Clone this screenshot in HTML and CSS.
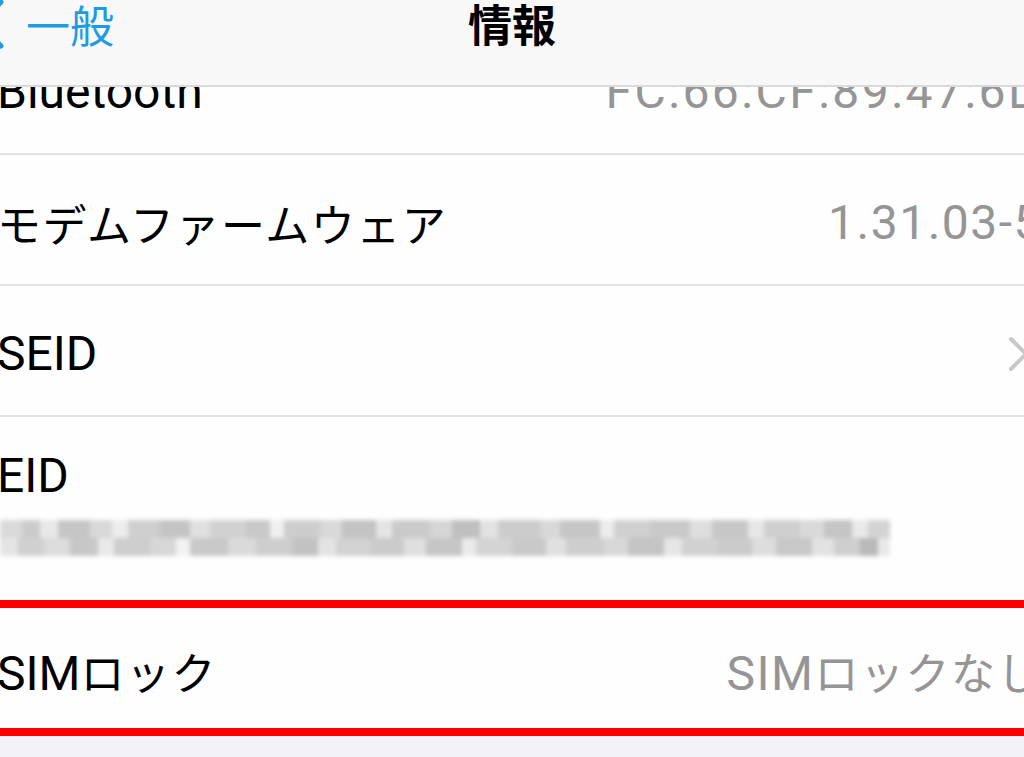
FILE: index.html
```html
<!DOCTYPE html>
<html lang="ja">
<head>
    <meta charset="UTF-8">
    <meta name="viewport" content="width=device-width, initial-scale=1.0">
    <title>情報</title>
    <link rel="stylesheet" href="styles.css">
</head>
<body>
    <div class="screen">
        <header class="navbar">
            <div class="nav-back">
                <svg class="back-chevron" width="30" height="50" viewBox="0 0 30 50">
                    <polyline points="26,3 5,25 26,47" fill="none" stroke="#1e9be2" stroke-width="5" stroke-linecap="round" stroke-linejoin="round"/>
                </svg>
                <span>一般</span>
            </div>
            <h1 class="nav-title">情報</h1>
            <div></div>
        </header>

        <div class="list">
            <div class="row">
                <span class="label">Bluetooth</span>
                <span class="value mac">FC:66:CF:89:47:6D</span>
            </div>
            <div class="row">
                <span class="label ja">モデムファームウェア</span>
                <span class="value">1.31.03-5</span>
            </div>
            <div class="row">
                <span class="label">SEID</span>
                <svg class="chevron" width="22" height="36" viewBox="0 0 22 36">
                    <polyline points="3,3 18,18 3,33" fill="none" stroke="#c7c7cc" stroke-width="4" stroke-linecap="round" stroke-linejoin="round"/>
                </svg>
            </div>
            <div class="row row-eid">
                <span class="label">EID</span>
                <div class="eid-blur"></div>
            </div>
            <div class="row row-sim">
                <span class="label">SIM<span class="ja">ロック</span></span>
                <span class="value">SIM<span class="ja">ロックなし</span></span>
            </div>
        </div>

        <div class="footer-space"></div>
    </div>
</body>
</html>
```

FILE: styles.css
```css
body {
    margin: 0;
    background-color: #f2f2f7;
    font-family: Roboto, "Noto Sans CJK JP", sans-serif;
    color: #000;
    overflow: hidden;
}
.screen {
    width: 1024px;
    height: 757px;
    overflow: hidden;
    display: flex;
    flex-direction: column;
}
.navbar {
    position: relative;
    z-index: 2;
    height: 85px;
    flex-shrink: 0;
    background-color: #f8f8f8;
    border-bottom: 2px solid #dadada;
    display: grid;
    grid-template-columns: 1fr auto 1fr;
    align-items: start;
    font-family: "Noto Sans CJK JP", sans-serif;
    font-size: 44px;
    line-height: 42px;
}
.nav-back {
    display: flex;
    align-items: center;
    color: #1e9be2;
    height: 48px;
}
.back-chevron {
    margin-left: -25px;
    margin-right: 21px;
}
.nav-title {
    margin: 0;
    font-size: 44px;
    font-weight: bold;
    line-height: 46px;
}
.list {
    margin-top: -63px;
    margin-left: -3px;
    margin-right: -40px;
    background-color: #fefefe;
    flex-shrink: 0;
}
.row {
    display: flex;
    justify-content: space-between;
    align-items: center;
    height: 123px;
    padding: 6px 22px 0 0;
    border-bottom: 2px solid #e3e3e3;
    font-size: 48px;
}
.ja {
    font-family: "Noto Sans CJK JP", sans-serif;
    font-size: 44px;
    letter-spacing: 1.5px;
}
.value {
    color: #959595;
    letter-spacing: 1.5px;
}
.mac {
    letter-spacing: 2.5px;
}
.chevron {
    margin-right: 12px;
}
.row-eid {
    display: block;
    height: auto;
    padding: 31px 0 44px;
    border-bottom: none;
}
.row-eid .label {
    display: block;
    line-height: 56px;
}
.eid-blur {
    margin: 16px 0 0 3px;
    width: 890px;
    height: 36px;
    filter: blur(2px);
    background-repeat: no-repeat;
    background-size: 100% 50%;
    background-position: top left, bottom left;
    background-image:
        linear-gradient(to right, #dadada 0 22px, #cbcbcb 22px 40px, #e8e8e8 40px 58px, #c6c6c6 58px 90px, #d8d8d8 90px 112px, #ededed 112px 128px, #cfcfcf 128px 160px, #c4c4c4 160px 190px, #e0e0e0 190px 210px, #d1d1d1 210px 246px, #c8c8c8 246px 270px, #f0f0f0 270px 284px, #cdcdcd 284px 320px, #d9d9d9 320px 342px, #c3c3c3 342px 376px, #e4e4e4 376px 392px, #cacaca 392px 430px, #d6d6d6 430px 452px, #bfbfbf 452px 480px, #e2e2e2 480px 498px, #cccccc 498px 540px, #d8d8d8 540px 560px, #c6c6c6 560px 600px, #ececec 600px 614px, #d0d0d0 614px 650px, #c9c9c9 650px 690px, #dedede 690px 712px, #c7c7c7 712px 748px, #e6e6e6 748px 764px, #cfcfcf 764px 800px, #d9d9d9 800px 824px, #c5c5c5 824px 852px, #e9e9e9 852px 868px, #d3d3d3 868px 890px),
        linear-gradient(to right, #e4e4e4 0 18px, #d0d0d0 18px 44px, #dcdcdc 44px 70px, #c7c7c7 70px 98px, #e9e9e9 98px 114px, #cdcdcd 114px 150px, #d7d7d7 150px 176px, #f2f2f2 176px 190px, #c9c9c9 190px 228px, #dadada 228px 256px, #cecece 256px 292px, #c2c2c2 292px 318px, #e3e3e3 318px 336px, #d2d2d2 336px 370px, #cbcbcb 370px 404px, #dfdfdf 404px 426px, #c6c6c6 426px 462px, #ebebeb 462px 476px, #d4d4d4 476px 512px, #c9c9c9 512px 546px, #e0e0e0 546px 566px, #cecece 566px 604px, #d8d8d8 604px 628px, #c4c4c4 628px 664px, #e6e6e6 664px 682px, #d1d1d1 682px 718px, #cbcbcb 718px 752px, #dddddd 752px 776px, #c8c8c8 776px 812px, #e2e2e2 812px 834px, #cfcfcf 834px 860px, #b9b9b9 860px 878px, #e8e8e8 878px 890px);
}
.row-sim {
    height: 114px;
    border-top: 8px solid #ff0000;
    border-bottom: 8px solid #ff0000;
}
.footer-space {
    flex: 1;
    background-color: #f2f2f7;
}
```
